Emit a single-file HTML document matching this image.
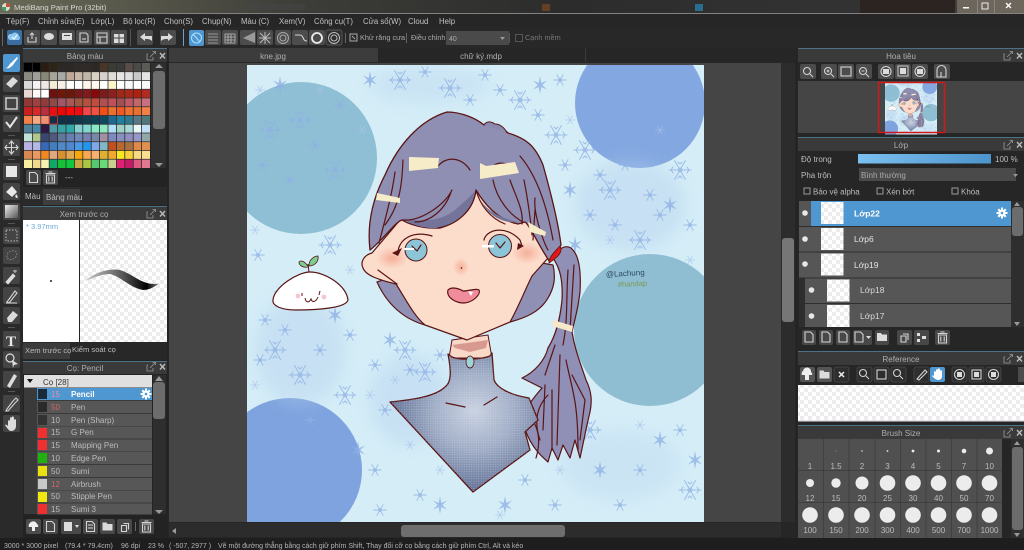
<!DOCTYPE html>
<html lang="vi"><head><meta charset="utf-8"><title>MediBang Paint Pro</title>
<style>
html,body{margin:0;padding:0;background:#222;width:1024px;height:550px;overflow:hidden}
svg{display:block;filter:blur(.35px)}
text{font-family:"Liberation Sans","Noto Sans CJK JP",sans-serif;font-size:8px;fill:#bcbcbc}
.h{fill:#b0b0b0;text-anchor:middle}
.b{fill:#4c4c4c}
.w{fill:#dcdcdc}
.l{fill:none;stroke:#d4d4d4;stroke-width:1.1}
.o{fill:none;stroke:#5a1414;stroke-width:1.2;stroke-linecap:round;stroke-linejoin:round}
</style></head><body>
<svg xmlns="http://www.w3.org/2000/svg" width="1024" height="550" viewBox="0 0 1024 550">
<defs>
<pattern id="ck" width="8" height="8" patternUnits="userSpaceOnUse"><rect width="8" height="8" fill="#fff"/><rect width="4" height="4" fill="#ececec"/><rect x="4" y="4" width="4" height="4" fill="#ececec"/></pattern>
<pattern id="dots" width="2.4" height="2.4" patternUnits="userSpaceOnUse"><circle cx="1.2" cy="1.2" r=".5" fill="#e4e8f2" opacity=".5"/></pattern>
<linearGradient id="tb" x1="0" x2="1"><stop offset="0" stop-color="#6a6a58"/><stop offset=".3" stop-color="#3c3c38"/><stop offset=".55" stop-color="#2c2c2c"/><stop offset=".85" stop-color="#333"/><stop offset="1" stop-color="#4a4640"/></linearGradient>
<linearGradient id="sl" x1="0" x2="1"><stop offset="0" stop-color="#7cc0f0"/><stop offset="1" stop-color="#4c94cc"/></linearGradient>
<linearGradient id="st" x1="0" x2="1"><stop offset="0" stop-color="#ccc"/><stop offset=".5" stop-color="#555"/><stop offset=".8" stop-color="#000"/><stop offset="1" stop-color="#999"/></linearGradient>
<linearGradient id="gr" x1="0" x2="1" y1="0" y2="1"><stop offset="0" stop-color="#eee"/><stop offset="1" stop-color="#555"/></linearGradient>
<radialGradient id="sw" cx=".57" cy=".42" r=".55"><stop offset="0" stop-color="#c9d2e2"/><stop offset=".5" stop-color="#a0adc6"/><stop offset="1" stop-color="#67769a"/></radialGradient>
<radialGradient id="bl"><stop offset="0" stop-color="#f4a890" stop-opacity=".85"/><stop offset="1" stop-color="#f4a890" stop-opacity="0"/></radialGradient>
<clipPath id="cv"><rect x="247" y="65" width="457" height="457"/></clipPath>
<clipPath id="th"><rect x="247" y="65" width="457" height="457"/></clipPath>
<filter id="hz"><feGaussianBlur stdDeviation="8"/></filter>
<g id="f" stroke="#8eb0e4" stroke-width="1" fill="none" stroke-linecap="round"><path d="M-11 0H11M-5.500-9.500 5.500 9.500M-5.500 9.500 5.500-9.500M7-3 9 0 7 3M-7-3-9 0-7 3M-2-8 0-6 2-8M-2 8 0 6 2 8"/><circle r="2"/></g>
<g id="m" transform="scale(.6)" stroke="#8eb0e4" stroke-width="1.500" fill="none"><path d="M-11 0H11M-5.500-9.500 5.500 9.500M-5.500 9.500 5.500-9.500"/><circle r="2.500"/></g>
<g id="s" fill="#8eb0e4"><path d="M0-9 1.300-2 7-4.500 2.300 0 7 4.500 1.300 2 0 9-1.300 2-7 4.500-2.300 0-7-4.500-1.300-2Z"/></g>
<g id="d" stroke="#a8c4ec" stroke-width=".8" fill="none"><path d="M-5 0H5M-2.500-4.300 2.500 4.300M-2.500 4.300 2.500-4.300"/></g>
<rect id="bb" width="16" height="15" rx="2" fill="#4c4c4c"/>
<rect id="bt" width="17" height="17" rx="2" fill="#444"/>
<g id="ext"><path d="M1 3H0V9H6V6" fill="none" stroke="#999" stroke-width=".8"/><path d="M3 6 8 1M5.500 .5H8.500V3" fill="none" stroke="#999" stroke-width=".8"/><path d="M13 2 18 7.500M18 2 13 7.500" stroke="#bbb" stroke-width="1.400"/></g>
<g id="trash"><path d="M-4-3H4V5H-4ZM-5-4.500H5M-2-6H2" class="l"/><path d="M-1.700-1.500V3.500M1.700-1.500V3.500" class="l"/></g>
<g id="doc"><path d="M-4-5H1.500L4-2.500V5H-4Z" class="l"/></g>
<g id="fold"><path d="M-5-4H-1L0-2.500H5V4H-5Z" class="w"/></g>
<g id="dup"><path d="M-3-1H2V5H-3Z" class="l"/><path d="M-1-3H4V3" class="l"/></g>
<g id="gear" fill="#fff"><circle r="3.500"/><path d="M-1-5.500H1V5.500H-1ZM-5.500-1H5.500V1H-5.500Z"/><path d="M-4.500-3 -3-4.500 4.500 3 3 4.500ZM4.500-3 3-4.500-4.500 3-3 4.500Z"/><circle r="1.300" fill="#4f97d0"/></g>
<g id="art">
<rect x="247" y="65" width="457" height="457" fill="#d4edf7"/>
<circle cx="301" cy="158" r="76" fill="#8fbfd4"/>
<circle cx="640" cy="103" r="65" fill="#83a7e0"/>
<circle cx="650" cy="330" r="76" fill="#8fbdd2"/>
<circle cx="290" cy="470" r="72" fill="#7ea3de"/>
<g opacity=".4" filter="url(#hz)">
<ellipse cx="300" cy="350" rx="45" ry="55" fill="#b4cfee"/>
<ellipse cx="630" cy="205" rx="55" ry="45" fill="#b4cfee"/>
<ellipse cx="430" cy="85" rx="60" ry="18" fill="#bcd6f0"/>
<ellipse cx="410" cy="400" rx="40" ry="45" fill="#b4cfee"/>
<ellipse cx="620" cy="465" rx="60" ry="35" fill="#c0d8f2"/>
</g>
<g opacity=".78">
<use href="#f" x="270" y="130"/><use href="#f" x="300" y="120"/><use href="#m" x="340" y="105"/><use href="#m" x="290" y="180"/><use href="#f" x="335" y="170"/><use href="#m" x="315" y="145"/><use href="#m" x="262" y="165"/>
<use href="#f" x="400" y="80"/><use href="#f" x="450" y="88"/><use href="#m" x="485" y="75"/><use href="#f" x="520" y="100"/><use href="#m" x="560" y="80"/><use href="#m" x="425" y="72"/><use href="#m" x="500" y="90"/><use href="#m" x="538" y="115"/><use href="#m" x="470" y="100"/>
<use href="#f" x="556" y="135"/><use href="#f" x="585" y="150"/><use href="#f" x="610" y="190"/><use href="#m" x="650" y="195"/><use href="#f" x="680" y="170"/><use href="#m" x="590" y="215"/><use href="#f" x="640" y="240"/><use href="#m" x="690" y="225"/><use href="#m" x="600" y="175"/><use href="#m" x="565" y="165"/><use href="#m" x="625" y="165"/><use href="#m" x="660" y="215"/><use href="#m" x="615" y="225"/>
<use href="#m" x="258" y="255"/><use href="#f" x="330" y="245"/><use href="#f" x="275" y="350"/><use href="#f" x="300" y="375"/><use href="#m" x="265" y="320"/><use href="#m" x="350" y="335"/><use href="#f" x="345" y="395"/><use href="#m" x="375" y="365"/><use href="#m" x="285" y="330"/><use href="#m" x="260" y="360"/><use href="#m" x="320" y="350"/>
<use href="#f" x="405" y="350"/><use href="#f" x="425" y="372"/><use href="#m" x="385" y="410"/><use href="#m" x="375" y="470"/><use href="#m" x="420" y="495"/><use href="#m" x="525" y="480"/><use href="#m" x="410" y="370"/><use href="#m" x="440" y="355"/>
<use href="#m" x="555" y="505"/><use href="#f" x="590" y="430"/><use href="#m" x="640" y="470"/><use href="#f" x="690" y="490"/><use href="#m" x="620" y="505"/><use href="#m" x="680" y="430"/><use href="#m" x="380" y="510"/><use href="#m" x="310" y="420"/>
<use href="#s" x="280" y="85"/><use href="#s" x="370" y="80"/><use href="#s" x="540" y="85"/><use href="#s" x="670" y="205"/><use href="#s" x="575" y="245"/><use href="#s" x="280" y="295"/><use href="#s" x="335" y="315"/><use href="#s" x="390" y="340"/><use href="#s" x="358" y="450"/><use href="#s" x="440" y="505"/><use href="#s" x="505" y="505"/><use href="#s" x="600" y="470"/><use href="#s" x="660" y="440"/><use href="#s" x="695" y="460"/><use href="#s" x="570" y="190"/>
<use href="#d" x="260" y="90"/><use href="#d" x="320" y="90"/><use href="#d" x="362" y="130"/><use href="#d" x="255" y="230"/><use href="#d" x="350" y="270"/><use href="#d" x="255" y="385"/><use href="#d" x="395" y="380"/><use href="#d" x="370" y="395"/><use href="#d" x="410" y="445"/><use href="#d" x="440" y="470"/><use href="#d" x="500" y="515"/><use href="#d" x="560" y="470"/><use href="#d" x="575" y="420"/><use href="#d" x="640" y="425"/><use href="#d" x="610" y="240"/><use href="#d" x="690" y="260"/><use href="#d" x="660" y="130"/><use href="#d" x="570" y="120"/>
</g>
<!-- mochi -->
<path d="M273 300C274 287 298 272 310 272C325 272 346 285 348 300C346 308 318 310 296 310C282 310 272 306 273 300Z" fill="#fff" stroke="#5a1414" stroke-width="1.200"/>
<path d="M309 272 308 264" stroke="#5a1414" fill="none"/>
<path d="M308 266C304 261 301 260 299 262C299 266 304 268 308 267Z" fill="#7ccf90" stroke="#5a1414" stroke-width=".8"/>
<path d="M309 265C309 260 314 256 318 256C319 261 315 266 309 266Z" fill="#7ccf90" stroke="#5a1414" stroke-width=".8"/>
<circle cx="298" cy="296" r="2.400" fill="#f6c6d0"/><circle cx="324" cy="297" r="2.400" fill="#f6c6d0"/>
<path d="M302 293 302 296M320 291 319 295M305 298C306 303 309 303 311 299C312 303 316 302 318 297" fill="none" stroke="#5a1414" stroke-width="1"/>
<!-- back hair lower -->
<path d="M377 282C385 300 400 318 425 325L510 322C525 318 540 312 548 298C554 288 556 278 553 265L470 250Z" fill="#9090b4" stroke="#5a1414" stroke-width="1.200"/>
<!-- ponytail -->
<path d="M553 258C558 248 567 243 573 250C580 258 581 275 580 292C578 310 574 322 572 332C575 350 580 362 586 380C592 392 592 402 590 412C586 428 583 445 580 458L575 440 570 458 563 445 558 460 552 448 548 462C540 455 532 447 526 432L520 430C522 415 527 405 542 388L522 378C535 372 545 360 548 348C556 335 560 320 562 300C563 280 560 268 553 258Z" fill="#9090b6" stroke="#5a1414" stroke-width="1.200" stroke-linejoin="round"/>
<path d="M568 270C566 300 568 320 563 345M574 265 570 330M555 345 545 375M560 355 557 445M566 360C572 390 578 400 578 450M572 375 585 400 580 440M548 395C538 405 533 420 540 440M552 390 552 450M545 385 543 430M532 420C540 430 540 445 536 458" class="o"/>
<path d="M553 320 573 326 572 332 552 326Z" fill="#f6e8c8"/>
<!-- neck -->
<path d="M452 340 449 358 492 358 488 335Z" fill="#fad8c8" stroke="#5a1414"/>
<path d="M452 345 488 340 486 348 470 352 455 348Z" fill="#d89a90"/>
<!-- sweater -->
<path d="M448 354 452 357C458 360 480 360 490 356L492 353 494 380C497 388 510 395 529 398L538 420 525 432 530 450 473 492 390 402C410 400 435 397 445 387 452 382 451 370 448 354Z" fill="url(#sw)" stroke="#5a1414" stroke-width="1.300" stroke-linejoin="round"/>
<path d="M448 354 452 357C458 360 480 360 490 356L492 353 494 380C497 388 510 395 529 398L538 420 525 432 530 450 473 492 390 402C410 400 435 397 445 387 452 382 451 370 448 354Z" fill="url(#dots)"/>
<path d="M446 403 465 407M484 405 497 397" class="o"/>
<ellipse cx="470" cy="362" rx="4" ry="6" fill="#9ed4d8" stroke="#5a1414" stroke-width=".8"/>
<!-- face -->
<path d="M400 220 372 253C364 255 360 262 363 268 366 276 380 280 396 284 405 298 414 316 425 325L467 340 510 322C517 310 525 290 532 276L548 258C556 250 540 220 530 215L470 190Z" fill="#fcdccb" stroke="#5a1414" stroke-width="1.200" stroke-linejoin="round"/>
<path d="M378 270 397 284" class="o"/>
<ellipse cx="392" cy="258" rx="16" ry="11" fill="url(#bl)"/>
<ellipse cx="527" cy="253" rx="15" ry="11" fill="url(#bl)"/>
<ellipse cx="461" cy="267" rx="8" ry="9" fill="url(#bl)"/>
<circle cx="461.500" cy="268" r=".8" fill="#5a1414"/>
<!-- mouth -->
<path d="M448 290C452 286 460 289 463 291 470 291 476 288 479 290 481 294 474 302 464 303 455 303 446 297 448 290Z" fill="#f08c9c" stroke="#5a1414" stroke-width="1.200"/>
<path d="M468 291 473 292 471 296Z" fill="#fff"/>
<!-- eyes -->
<circle cx="416" cy="250" r="11" fill="#8cc4d8" stroke="#5a1414" stroke-width="1"/>
<circle cx="500" cy="246" r="11.500" fill="#8cc4d8" stroke="#5a1414" stroke-width="1"/>
<path d="M412 246 417 251 421 245M496 243 500 248 505 242" class="o" stroke-width=".9"/>
<path d="M398 253C398 240 412 230 432 236" class="o" stroke-width="2.200"/>
<path d="M484 240C486 230 505 224 520 240L522 246" class="o" stroke-width="2.200"/>
<path d="M392 253 402 248 398 256Z M518 243 524 246 517 250Z" fill="#5a1414"/>
<rect x="404" y="248" width="10" height="2" fill="#fff"/><rect x="482" y="245" width="12" height="2.500" fill="#fff"/>
<!-- hair -->
<path d="M370 250C367 225 372 200 385 175 398 145 420 120 447 112 462 112 477 119 484 125 490 122 500 125 508 133 525 138 535 145 543 165 550 190 558 220 561 245L550 262C538 245 530 225 525 222L518 224C498 220 485 205 476 190 474 205 462 222 440 228 425 229 410 225 402 220 395 222 385 238 370 250Z" fill="#8f8fb4" stroke="#5a1414" stroke-width="1.300" stroke-linejoin="round"/>
<path d="M484 125C487 120 492 122 495 124 500 124 505 128 507 133" fill="#8a8ab0" stroke="#5a1414"/>
<path d="M403 218C420 222 440 222 455 210 464 202 472 195 476 190 474 205 462 222 440 228 425 229 410 225 403 218Z" fill="#74749a"/>
<path d="M480 200C488 212 505 220 520 222 505 224 490 218 480 200Z" fill="#74749a"/>
<path d="M403 160C402 185 400 205 385 225M395 172C392 195 385 220 379 243M402 220C420 222 445 205 452 190M415 222C430 222 445 210 451 192M438 228C460 224 474 208 476 190M476 190C480 205 490 218 505 224M493 180C497 200 510 215 523 222M510 180C515 195 524 210 522 224M524 180C527 195 530 215 532 235M535 210 533 240M520 156C532 170 545 195 553 240M535 198C533 215 545 245 548 250M438 166C448 155 462 158 470 170M490 172C492 162 505 160 512 168" class="o"/>
<path d="M409 157 439 158 438 168 409 171Z M480 163 486 166 515 162 519 173 480 179Z M377 193 400 198 400 203 376 200Z M528 222 546 232 545 236 530 232Z" fill="#f6ecc8"/>
<path d="M549 263C548 258 556 250 560 246L561 248C562 254 556 258 549 263Z" fill="#e01818" stroke="#5a1414" stroke-width=".8"/>
<!-- signature -->
<text x="606" y="277" style="font-size:8px;fill:#2e4a60" transform="rotate(-3 606 277)">@Lachung</text>
<text x="618" y="287" style="font-size:7.500px;fill:#7a9a50" transform="rotate(-3 618 287)">#handap</text>
</g>
</defs>

<rect width="1024" height="550" fill="#232323"/>
<!-- title bar -->
<rect width="1024" height="13.500" fill="url(#tb)"/>
<rect x="245" y="4" width="60" height="6" fill="#444" opacity=".6"/><rect x="542" y="4" width="8" height="7" fill="#8a4a24" opacity=".6"/><rect x="695" y="4" width="8" height="7" fill="#2a88b8" opacity=".7"/><rect x="860" y="0" width="95" height="13" fill="#2c2420"/>
<circle cx="6" cy="7" r="4" fill="#d8e0d0"/><path d="M6 3A4 4 0 0 1 10 7H6Z" fill="#d04a30"/><path d="M2 7A4 4 0 0 0 6 11V7Z" fill="#38a060"/>
<text x="14" y="10" style="fill:#d8d8d4;font-size:7.700px">MediBang Paint Pro (32bit)</text>
<rect x="957" y="0" width="67" height="13" fill="#6c665c"/><rect x="977" y="0" width="1" height="13" fill="#8a847a"/><rect x="994" y="0" width="1" height="13" fill="#8a847a"/>
<rect x="963" y="7" width="6" height="1.500" fill="#fff"/><rect x="982" y="3" width="6" height="6" fill="none" stroke="#eee"/><path d="M1006 3 1011 8M1011 3 1006 8" stroke="#fff" stroke-width="1.300"/>
<rect y="13" width="1024" height=".8" fill="#9a9a9a"/>
<!-- menu -->
<rect y="14" width="1024" height="13" fill="#262626"/>
<text y="24" style="font-size:7.800px;fill:#c0c0c0"><tspan x="6">Tệp(F)</tspan><tspan x="38">Chỉnh sửa(E)</tspan><tspan x="91">Lớp(L)</tspan><tspan x="123">Bộ lọc(R)</tspan><tspan x="164">Chọn(S)</tspan><tspan x="202">Chụp(N)</tspan><tspan x="241">Màu (C)</tspan><tspan x="279">Xem(V)</tspan><tspan x="314">Công cụ(T)</tspan><tspan x="363">Cửa sổ(W)</tspan><tspan x="408">Cloud</tspan><tspan x="439">Help</tspan></text>
<rect y="27" width="1024" height="21" fill="#282828"/>
<!-- top toolbar -->
<g fill="#4c4c4c"><rect x="7" y="30" width="15" height="15" rx="2" fill="#3a6ea0"/><use href="#bb" x="24" y="30"/><use href="#bb" x="41" y="30"/><use href="#bb" x="59" y="30"/><use href="#bb" x="76" y="30"/><use href="#bb" x="94" y="30"/><use href="#bb" x="111" y="30"/><use href="#bb" x="137" y="30"/><use href="#bb" x="160" y="30"/></g>
<path d="M10 40A3 3 0 0 1 12 34 4 4 0 0 1 19 36 2.500 2.500 0 0 1 19 40Z" fill="#8cc8f0"/><path d="M12 37 14 39 17 35" stroke="#fff" fill="none"/>
<path d="M28 37V42H36V37M32 39V33M30 35 32 33 34 35" class="l"/>
<ellipse cx="49" cy="36.500" rx="5" ry="3.500" class="w"/><rect x="62" y="33" width="10" height="7" class="w"/><rect x="64" y="35" width="6" height="1" fill="#444"/><path d="M80 33H86L88 35V42H80Z" class="l"/><path d="M82 39H86" class="l"/><path d="M97 33H107V43H97ZM97 37H107M100 37V43" class="l"/><rect x="114" y="34" width="10" height="9" class="w"/><path d="M114 38H124M119 34V43" stroke="#444"/>
<path d="M140 37 145 33V36H152V41C150 39 148 39 145 39V41Z" class="w"/><path d="M173 37 168 33V36H161V41C163 39 165 39 168 39V41Z" class="w"/>
<rect x="2" y="29" width="1" height="17" fill="#666"/><rect x="130" y="29" width="1" height="17" fill="#555"/>
<rect x="183" y="29" width="1" height="17" fill="#6ea0c8"/>
<rect x="189" y="30" width="15" height="16" rx="2" fill="#4f97d0"/><circle cx="196.500" cy="38" r="5" fill="none" stroke="#aee0ff"/><path d="M193 34 200 42" stroke="#aee0ff"/>
<use href="#bb" x="205" y="30"/><use href="#bb" x="222" y="30"/><use href="#bb" x="240" y="30"/><use href="#bb" x="257" y="30"/><use href="#bb" x="275" y="30"/><use href="#bb" x="292" y="30"/><use href="#bb" x="309" y="30"/><rect x="326" y="30" width="16" height="15" rx="2" fill="#303030" stroke="#666" stroke-width=".7"/>
<path d="M208 34H218M208 37H218M208 40H218M208 43H218" stroke="#999"/><path d="M225 34H235V43H225ZM225 37H235M225 40H235M228 34V43M231 34V43" stroke="#bbb" fill="none" stroke-width=".8"/><path d="M255 32 243 38 255 43Z" fill="#999"/>
<path d="M260 33 270 43M270 33 260 43M259 38H271M265 32V44" stroke="#bbb" stroke-width="1"/><circle cx="283" cy="38" r="5.500" fill="none" stroke="#aaa"/><circle cx="283" cy="38" r="3" fill="none" stroke="#aaa"/>
<path d="M295 35H300C304 35 302 41 307 41" class="l"/><circle cx="317" cy="38" r="5" fill="none" stroke="#eee" stroke-width="1.800"/><circle cx="334" cy="38" r="5.500" fill="none" stroke="#bbb"/><circle cx="334" cy="38" r="3" fill="none" stroke="#bbb"/>
<rect x="345" y="33" width="1" height="10" fill="#666"/><rect x="350" y="34" width="7" height="7" fill="none" stroke="#aaa"/><path d="M352 36 355 39" stroke="#aaa"/>
<text x="360" y="40" style="font-size:7.300px;fill:#aaa">Khử răng cưa</text><rect x="406" y="33" width="1" height="10" fill="#666"/>
<text x="411" y="40" style="font-size:7.300px;fill:#aaa">Điều chỉnh</text>
<rect x="446" y="31" width="63" height="14" fill="#4a4a4a"/><text x="449" y="41" style="font-size:7px;fill:#aaa">40</text><path d="M500 37H505L502.500 40Z" fill="#999"/>
<rect x="509" y="33" width="1" height="10" fill="#555"/><rect x="515.500" y="34.500" width="7" height="7" fill="none" stroke="#555"/><text x="525" y="40" style="font-size:7.300px;fill:#777">Cạnh mềm</text>

<!-- centre -->
<rect x="168" y="48" width="628" height="490" fill="#262626"/>
<rect x="169" y="48" width="209" height="14" fill="#3c3c3c"/><text class="h" x="273" y="59">kne.jpg</text>
<text class="h" x="481" y="59">chữ ký.mdp</text><rect x="585" y="48" width="1" height="14" fill="#3a3a3a"/>
<rect x="169" y="63" width="612" height="459" fill="#454545"/>
<use href="#art" clip-path="url(#cv)"/>
<rect x="781" y="63" width="14" height="459" fill="#2c2c2c"/><rect x="782" y="238" width="12" height="84" rx="3" fill="#767676"/>
<rect x="169" y="523" width="612" height="14" fill="#2c2c2c"/><rect x="401" y="525" width="164" height="12" rx="3" fill="#6e6e6e"/><path d="M176 528 172 531 176 534Z" fill="#999"/>

<!-- left tools -->
<rect x="0" y="48" width="23" height="490" fill="#2a2a2a"/>
<rect x="3" y="54" width="17" height="18" rx="2" fill="#4f97d0"/>
<g><use href="#bt" x="3" y="75"/><use href="#bt" x="3" y="95"/><use href="#bt" x="3" y="115"/><use href="#bt" x="3" y="139"/><use href="#bt" x="3" y="163"/><use href="#bt" x="3" y="183"/><use href="#bt" x="3" y="203"/><use href="#bt" x="3" y="227"/><use href="#bt" x="3" y="247"/><use href="#bt" x="3" y="267"/><use href="#bt" x="3" y="287"/><use href="#bt" x="3" y="307"/><use href="#bt" x="3" y="331"/><use href="#bt" x="3" y="351"/><use href="#bt" x="3" y="371"/><use href="#bt" x="3" y="395"/><use href="#bt" x="3" y="415"/></g>
<rect x="8" y="135" width="7" height="1" fill="#555"/><rect x="8" y="159" width="7" height="1" fill="#555"/><rect x="8" y="223" width="7" height="1" fill="#555"/><rect x="8" y="327" width="7" height="1" fill="#555"/><rect x="8" y="391" width="7" height="1" fill="#555"/>
<path d="M6 68C9 67 9 64 11 63L17 57 18 58 13 65C11 67 9 69 6 68Z" fill="#fff"/>
<path d="M6 84 13 77 18 81 11 88Z" class="w"/><rect x="6" y="98" width="11" height="11" fill="none" stroke="#ccc" stroke-width="1.500"/>
<path d="M6 122 10 127 17 117" fill="none" stroke="#e4e4e4" stroke-width="2"/><path d="M11.500 141V154M5 147.500H18M9 144 11.500 141 14 144M9 151 11.500 154 14 151M7 145 5 147.500 7 150M16 145 18 147.500 16 150" class="l"/>
<rect x="6" y="166" width="11" height="11" fill="#e8e8e8"/><path d="M6 192 12 186 17 192 12 197Z" fill="#e8e8e8"/><path d="M16 194C18 196 18 198 17 198 15 198 15 196 16 194Z" fill="#e8e8e8"/><rect x="5" y="205" width="13" height="13" fill="url(#gr)"/>
<rect x="6" y="230" width="11" height="11" fill="none" stroke="#bbb" stroke-dasharray="1.500 1.500"/>
<path d="M7 257C6 252 12 250 15 251 18 252 17 258 13 259 10 260 8 260 7 257Z" fill="none" stroke="#888" stroke-dasharray="1.500 1.500"/>
<path d="M6 282 13 274 15 276 8 284ZM15 270V273M13 271H17" fill="#ddd" stroke="#ddd" stroke-width=".8"/>
<path d="M7 302 15 291 17 293 9 303ZM6 303H17" class="l"/><path d="M7 318 13 311 18 315 12 322 8 322Z" class="w"/>
<text x="6" y="346" style="font:bold 15px 'Liberation Serif',serif;fill:#e8e8e8">T</text>
<circle cx="10" cy="358" r="4" fill="none" stroke="#ddd" stroke-width="1.200"/><path d="M12 360 18 364 14 365 13 368Z" class="w"/>
<path d="M7 386 14 374 17 376 10 388Z" class="w"/><path d="M7 409 13 401 16 398 18 400 15 403 8 411 6 411Z" class="l"/>
<path d="M8 428V421C8 420 10 420 10 421V418C10 417 12 417 12 418V417C12 416 14 416 14 418V420C14 419 16 419 16 420V426C16 429 14 431 11 431 9 431 7 428 5 425 6 424 7 425 8 426Z" class="w"/>

<!-- left panel: palette -->
<rect x="23" y="48" width="144" height="1" fill="#4c7188"/>
<rect x="23" y="49" width="144" height="13" fill="#3a3a3a"/><text class="h" x="85" y="59">Bảng màu</text><use href="#ext" x="147" y="51"/>
<g><rect x="24" y="63" width="126" height="105" fill="#2d2d2d"/>
<g transform="translate(24 63)"><g transform="scale(8.400 8.750)">
<g><rect x="0" y="0" width="1" height="1" fill="#000"/><rect x="1" y="0" width="1" height="1" fill="#000"/><rect x="2" y="0" width="1" height="1" fill="#2a1c10"/><rect x="3" y="0" width="1" height="1" fill="#2e2416"/><rect x="4" y="0" width="1" height="1" fill="#2c2824"/><rect x="5" y="0" width="1" height="1" fill="#2c2824"/><rect x="6" y="0" width="1" height="1" fill="#302a28"/><rect x="7" y="0" width="1" height="1" fill="#302a28"/><rect x="8" y="0" width="1" height="1" fill="#2e2824"/><rect x="9" y="0" width="1" height="1" fill="#4a3626"/><rect x="10" y="0" width="1" height="1" fill="#3a3a36"/><rect x="11" y="0" width="1" height="1" fill="#3a3a38"/><rect x="12" y="0" width="1" height="1" fill="#5a4c48"/><rect x="13" y="0" width="1" height="1" fill="#4a4a46"/><rect x="14" y="0" width="1" height="1" fill="#5c5a56"/></g>
<g transform="translate(0 1)"><rect x="0" width="1" height="1" fill="#8a8a80"/><rect x="1" width="1" height="1" fill="#a0a098"/><rect x="2" width="1" height="1" fill="#888878"/><rect x="3" width="1" height="1" fill="#a8a498"/><rect x="4" width="1" height="1" fill="#a8a8a4"/><rect x="5" width="1" height="1" fill="#c0a898"/><rect x="6" width="1" height="1" fill="#c8b8a8"/><rect x="7" width="1" height="1" fill="#c0b8a8"/><rect x="8" width="1" height="1" fill="#d8d0c0"/><rect x="9" width="1" height="1" fill="#d8d0cc"/><rect x="10" width="1" height="1" fill="#e0dcd8"/><rect x="11" width="1" height="1" fill="#e8e4e4"/><rect x="12" width="1" height="1" fill="#e0e0e0"/><rect x="13" width="1" height="1" fill="#c8c8c8"/><rect x="14" width="1" height="1" fill="#e4e4e4"/></g>
<g transform="translate(0 2)"><rect x="0" width="1" height="1" fill="#d8d8d8"/><rect x="1" width="1" height="1" fill="#f4f4f4"/><rect x="2" width="1" height="1" fill="#f0e8e4"/><rect x="3" width="1" height="1" fill="#f4ecd8"/><rect x="4" width="1" height="1" fill="#f8f0e8"/><rect x="5" width="1" height="1" fill="#fff"/><rect x="6" width="1" height="1" fill="#fff"/><rect x="7" width="1" height="1" fill="#fff8e8"/><rect x="8" width="1" height="1" fill="#fff8f0"/><rect x="9" width="1" height="1" fill="#fff"/><rect x="10" width="1" height="1" fill="#fff4c8"/><rect x="11" width="1" height="1" fill="#fff"/><rect x="12" width="1" height="1" fill="#f8f8f8"/><rect x="13" width="1" height="1" fill="#fff"/><rect x="14" width="1" height="1" fill="#f8f8f8"/></g>
<g transform="translate(0 3)"><rect x="0" width="1" height="1" fill="#e8d8d4"/><rect x="1" width="1" height="1" fill="#fff8f4"/><rect x="2" width="1" height="1" fill="#fff"/><rect x="3" width="1" height="1" fill="#701010"/><rect x="4" width="1" height="1" fill="#701808"/><rect x="5" width="1" height="1" fill="#6a1808"/><rect x="6" width="1" height="1" fill="#781818"/><rect x="7" width="1" height="1" fill="#801a1c"/><rect x="8" width="1" height="1" fill="#8a0808"/><rect x="9" width="1" height="1" fill="#7a1c1c"/><rect x="10" width="1" height="1" fill="#8a2020"/><rect x="11" width="1" height="1" fill="#a02818"/><rect x="12" width="1" height="1" fill="#a82818"/><rect x="13" width="1" height="1" fill="#b02010"/><rect x="14" width="1" height="1" fill="#b02c20"/></g>
<g transform="translate(0 4)"><rect x="0" width="1" height="1" fill="#903838"/><rect x="1" width="1" height="1" fill="#a04040"/><rect x="2" width="1" height="1" fill="#903c3c"/><rect x="3" width="1" height="1" fill="#904848"/><rect x="4" width="1" height="1" fill="#a05868"/><rect x="5" width="1" height="1" fill="#a85858"/><rect x="6" width="1" height="1" fill="#a05840"/><rect x="7" width="1" height="1" fill="#b85040"/><rect x="8" width="1" height="1" fill="#c04c3c"/><rect x="9" width="1" height="1" fill="#b05050"/><rect x="10" width="1" height="1" fill="#c05058"/><rect x="11" width="1" height="1" fill="#a05050"/><rect x="12" width="1" height="1" fill="#c05868"/><rect x="13" width="1" height="1" fill="#c06868"/><rect x="14" width="1" height="1" fill="#c87080"/></g>
<g transform="translate(0 5)"><rect x="0" width="1" height="1" fill="#c82020"/><rect x="1" width="1" height="1" fill="#d82828"/><rect x="2" width="1" height="1" fill="#b83040"/><rect x="3" width="1" height="1" fill="#e81010"/><rect x="4" width="1" height="1" fill="#e80808"/><rect x="5" width="1" height="1" fill="#f80808"/><rect x="6" width="1" height="1" fill="#f00c10"/><rect x="7" width="1" height="1" fill="#f04848"/><rect x="8" width="1" height="1" fill="#f05040"/><rect x="9" width="1" height="1" fill="#f05018"/><rect x="10" width="1" height="1" fill="#e87030"/><rect x="11" width="1" height="1" fill="#f05828"/><rect x="12" width="1" height="1" fill="#f07030"/><rect x="13" width="1" height="1" fill="#e87030"/><rect x="14" width="1" height="1" fill="#f08048"/></g>
<g transform="translate(0 6)"><rect x="0" width="1" height="1" fill="#f08048"/><rect x="1" width="1" height="1" fill="#f8a880"/><rect x="2" width="1" height="1" fill="#f09070"/><rect x="3" width="1" height="1" fill="#103048"/><rect x="4" width="1" height="1" fill="#103048"/><rect x="5" width="1" height="1" fill="#103048"/><rect x="6" width="1" height="1" fill="#103848"/><rect x="7" width="1" height="1" fill="#104050"/><rect x="8" width="1" height="1" fill="#104058"/><rect x="9" width="1" height="1" fill="#104860"/><rect x="10" width="1" height="1" fill="#206890"/><rect x="11" width="1" height="1" fill="#2080a0"/><rect x="12" width="1" height="1" fill="#307890"/><rect x="13" width="1" height="1" fill="#587888"/><rect x="14" width="1" height="1" fill="#507878"/></g>
<g transform="translate(0 7)"><rect x="0" width="1" height="1" fill="#508098"/><rect x="1" width="1" height="1" fill="#4888a8"/><rect x="2" width="1" height="1" fill="#301840"/><rect x="3" width="1" height="1" fill="#5098a8"/><rect x="4" width="1" height="1" fill="#38a0a0"/><rect x="5" width="1" height="1" fill="#30a8a8"/><rect x="6" width="1" height="1" fill="#88d0d0"/><rect x="7" width="1" height="1" fill="#80d8d0"/><rect x="8" width="1" height="1" fill="#88e8c8"/><rect x="9" width="1" height="1" fill="#90e8c0"/><rect x="10" width="1" height="1" fill="#b0e0f8"/><rect x="11" width="1" height="1" fill="#a0d0c8"/><rect x="12" width="1" height="1" fill="#a8d8d8"/><rect x="13" width="1" height="1" fill="#e8f8f8"/><rect x="14" width="1" height="1" fill="#c0e0f8"/></g>
<g transform="translate(0 8)"><rect x="0" width="1" height="1" fill="#c0e0d8"/><rect x="1" width="1" height="1" fill="#b0c890"/><rect x="2" width="1" height="1" fill="#384870"/><rect x="3" width="1" height="1" fill="#505880"/><rect x="4" width="1" height="1" fill="#607898"/><rect x="5" width="1" height="1" fill="#6880b0"/><rect x="6" width="1" height="1" fill="#7088b8"/><rect x="7" width="1" height="1" fill="#7880b0"/><rect x="8" width="1" height="1" fill="#7888a8"/><rect x="9" width="1" height="1" fill="#a090a0"/><rect x="10" width="1" height="1" fill="#8088c0"/><rect x="11" width="1" height="1" fill="#8890c0"/><rect x="12" width="1" height="1" fill="#9090c0"/><rect x="13" width="1" height="1" fill="#9898c8"/><rect x="14" width="1" height="1" fill="#90a8a8"/></g>
<g transform="translate(0 9)"><rect x="0" width="1" height="1" fill="#b8b0e0"/><rect x="1" width="1" height="1" fill="#b0b8e8"/><rect x="2" width="1" height="1" fill="#3868b8"/><rect x="3" width="1" height="1" fill="#4080c0"/><rect x="4" width="1" height="1" fill="#5088c8"/><rect x="5" width="1" height="1" fill="#5088d0"/><rect x="6" width="1" height="1" fill="#4898e8"/><rect x="7" width="1" height="1" fill="#2098f0"/><rect x="8" width="1" height="1" fill="#80a8e8"/><rect x="9" width="1" height="1" fill="#80b8c8"/><rect x="10" width="1" height="1" fill="#c05020"/><rect x="11" width="1" height="1" fill="#b86830"/><rect x="12" width="1" height="1" fill="#a87040"/><rect x="13" width="1" height="1" fill="#e08848"/><rect x="14" width="1" height="1" fill="#e09050"/></g>
<g transform="translate(0 10)"><rect x="0" width="1" height="1" fill="#d88850"/><rect x="1" width="1" height="1" fill="#e89860"/><rect x="2" width="1" height="1" fill="#f08820"/><rect x="3" width="1" height="1" fill="#e0a880"/><rect x="4" width="1" height="1" fill="#d89030"/><rect x="5" width="1" height="1" fill="#e0a850"/><rect x="6" width="1" height="1" fill="#f8a808"/><rect x="7" width="1" height="1" fill="#f8a850"/><rect x="8" width="1" height="1" fill="#f8b070"/><rect x="9" width="1" height="1" fill="#e0b030"/><rect x="10" width="1" height="1" fill="#f0a830"/><rect x="11" width="1" height="1" fill="#f8e820"/><rect x="12" width="1" height="1" fill="#f8d038"/><rect x="13" width="1" height="1" fill="#f8d880"/><rect x="14" width="1" height="1" fill="#f8e090"/></g>
<g transform="translate(0 11)"><rect x="0" width="1" height="1" fill="#f8f0a0"/><rect x="1" width="1" height="1" fill="#f0d890"/><rect x="2" width="1" height="1" fill="#f8f0b0"/><rect x="3" width="1" height="1" fill="#10a868"/><rect x="4" width="1" height="1" fill="#18c038"/><rect x="5" width="1" height="1" fill="#10c840"/><rect x="6" width="1" height="1" fill="#c8a840"/><rect x="7" width="1" height="1" fill="#a8c840"/><rect x="8" width="1" height="1" fill="#58c870"/><rect x="9" width="1" height="1" fill="#68d878"/><rect x="10" width="1" height="1" fill="#c8d090"/><rect x="11" width="1" height="1" fill="#e02070"/><rect x="12" width="1" height="1" fill="#c81868"/><rect x="13" width="1" height="1" fill="#e05880"/><rect x="14" width="1" height="1" fill="#e07890"/></g>
</g></g>
<path d="M24 71.750H150M24 80.500H150M24 89.250H150M24 98H150M24 106.750H150M24 115.500H150M24 124.250H150M24 133H150M24 141.750H150M24 150.500H150M24 159.250H150M32.400 63V168M40.800 63V168M49.200 63V168M57.600 63V168M66 63V168M74.400 63V168M82.800 63V168M91.200 63V168M99.600 63V168M108 63V168M116.400 63V168M124.800 63V168M133.200 63V168M141.600 63V168" stroke="#2d2d2d" stroke-width=".8"/>
<rect x="49.500" y="115.700" width="8" height="8.300" fill="none" stroke="#c03030"/></g>
<rect x="151" y="63" width="15" height="105" fill="#303030"/><rect x="153" y="71" width="12" height="58" rx="3" fill="#6c6c6c"/><path d="M155 68 159 64 163 68ZM155 163 159 167 163 163Z" fill="#999"/>
<rect x="26" y="170" width="15" height="15" rx="2" fill="#484848"/><use href="#doc" x="33.500" y="177.500"/><rect x="43" y="170" width="15" height="15" rx="2" fill="#484848"/><use href="#trash" x="50.500" y="178"/><text x="65" y="180">---</text>
<rect x="23" y="187" width="144" height="18" fill="#2a2a2a"/><rect x="43" y="189" width="37" height="16" fill="#3e3e3e"/><text x="25" y="199">Màu</text><text x="46" y="200">Bảng màu</text>

<!-- brush preview -->
<rect x="23" y="206" width="144" height="1" fill="#4c7188"/>
<rect x="23" y="207" width="144" height="13" fill="#3a3a3a"/><text class="h" x="84" y="217">Xem trước cọ</text><use href="#ext" x="147" y="209"/>
<rect x="23" y="220" width="56" height="122" fill="#fff"/><rect x="80" y="220" width="87" height="122" fill="url(#ck)"/>
<text x="26" y="229" style="fill:#6ea8d4;font-size:7.500px">* 3.97mm</text><circle cx="51" cy="281" r="1" fill="#222"/>
<path d="M85 281C95 272 110 268 120 270 133 274 140 284 155 284 160 284 160 282 162 281 158 284 152 290 143 290 130 288 120 276 110 274 100 274 92 279 85 281Z" fill="url(#st)"/>
<rect x="23" y="342" width="144" height="18" fill="#282828"/><rect x="23" y="343" width="47" height="16" fill="#3c3c3c"/><text x="25" y="353" style="font-size:7.600px">Xem trước cọ</text><text x="72" y="352" style="font-size:7.600px">Kiểm soát cọ</text>

<!-- brush panel -->
<rect x="23" y="361" width="144" height="1" fill="#4c7188"/>
<rect x="23" y="362" width="144" height="12" fill="#3a3a3a"/><text class="h" x="85" y="371">Cọ: Pencil</text><use href="#ext" x="147" y="362"/>
<rect x="24" y="375" width="128" height="139" fill="#3a3a3a"/>
<rect x="24" y="375" width="128" height="12.500" fill="#e0e0e0"/><path d="M27 379H33L30 383Z" fill="#111"/><text x="43" y="385" style="fill:#333;font-size:8px">Cọ [28]</text>
<rect x="37" y="388" width="115" height="12" fill="#4f97d0"/>
<g fill="#575757"><rect x="37" y="401" width="115" height="12"/><rect x="37" y="414" width="115" height="12"/><rect x="37" y="426.500" width="115" height="12"/><rect x="37" y="439.500" width="115" height="12"/><rect x="37" y="452" width="115" height="12"/><rect x="37" y="465" width="115" height="12"/><rect x="37" y="478" width="115" height="12"/><rect x="37" y="490.500" width="115" height="12"/><rect x="37" y="503.500" width="115" height="11"/></g>
<rect x="38" y="389" width="9" height="10" fill="#1a2a3a"/><rect x="38" y="402" width="9" height="10" fill="#2a2a2a"/><rect x="38" y="415" width="9" height="10" fill="#333"/><rect x="38" y="428" width="9" height="10" fill="#f03030"/><rect x="38" y="440" width="9" height="10" fill="#f03030"/><rect x="38" y="453" width="9" height="10" fill="#20b010"/><rect x="38" y="466" width="9" height="10" fill="#e8e010"/><rect x="38" y="479" width="9" height="10" fill="#c8c8c8"/><rect x="38" y="492" width="9" height="10" fill="#f0e810"/><rect x="38" y="504" width="9" height="10" fill="#f03030"/>
<g style="font-size:8px">
<text x="51" y="397" style="fill:#f088a0">15</text><text x="71" y="397" style="fill:#fff;font-weight:bold">Pencil</text>
<text x="51" y="410" style="fill:#d06868">50</text><text x="71" y="410">Pen</text>
<text x="51" y="423">10</text><text x="71" y="423">Pen (Sharp)</text>
<text x="51" y="435">15</text><text x="71" y="435">G Pen</text>
<text x="51" y="448">15</text><text x="71" y="448">Mapping Pen</text>
<text x="51" y="461">10</text><text x="71" y="461">Edge Pen</text>
<text x="51" y="474">50</text><text x="71" y="474">Sumi</text>
<text x="51" y="487" style="fill:#d06868">12</text><text x="71" y="487">Airbrush</text>
<text x="51" y="499">50</text><text x="71" y="499">Stipple Pen</text>
<text x="51" y="512">15</text><text x="71" y="512">Sumi 3</text></g>
<use href="#gear" x="146" y="394"/>
<rect x="153" y="375" width="13" height="139" fill="#2e2e2e"/><rect x="153" y="382" width="12" height="37" rx="3" fill="#6c6c6c"/><path d="M155 381 159 376 163 381ZM155 510 159 514 163 510Z" fill="#999"/>
<rect x="26" y="519" width="15" height="15" rx="2" fill="#4c4c4c"/><path d="M29 527A3 3 0 0 1 30 523 4 4 0 0 1 37 524 2.500 2.500 0 0 1 38 527H35V531H32V527Z" fill="#eee"/>
<rect x="43" y="519" width="15" height="15" rx="2" fill="#484848"/><use href="#doc" x="50.500" y="526.500"/>
<rect x="61" y="519" width="20" height="15" rx="2" fill="#484848"/><rect x="64" y="522" width="8" height="9" fill="#ddd"/><path d="M75 525H79L77 528Z" fill="#ddd"/>
<rect x="83" y="519" width="15" height="15" rx="2" fill="#484848"/><use href="#doc" x="90.500" y="526.500"/><path d="M88 525H93M88 528H93" class="l"/>
<rect x="100" y="519" width="15" height="15" rx="2" fill="#484848"/><use href="#fold" x="107.500" y="526.500"/>
<rect x="117" y="519" width="15" height="15" rx="2" fill="#484848"/><use href="#dup" x="124.500" y="526.500"/><rect x="135" y="522" width="1" height="9" fill="#666"/>
<rect x="139" y="519" width="15" height="15" rx="2" fill="#484848"/><use href="#trash" x="146.500" y="527"/>

<!-- right panels -->
<rect x="797" y="48" width="227" height="490" fill="#262626"/>
<rect x="798" y="48" width="226" height="1" fill="#4c7188"/><rect x="798" y="49" width="226" height="13" fill="#3a3a3a"/><text class="h" x="901" y="59">Hoa tiêu</text><use href="#ext" x="1004" y="51"/>
<use href="#bb" x="800" y="64"/><use href="#bb" x="821" y="64"/><use href="#bb" x="838" y="64"/><use href="#bb" x="856" y="64"/><use href="#bb" x="878" y="64"/><use href="#bb" x="895" y="64"/><use href="#bb" x="912" y="64"/><use href="#bb" x="934" y="64"/>
<g><circle cx="807" cy="71" r="3.500" class="l"/><path d="M810 74 813 77" class="l"/><circle cx="828" cy="71" r="3.500" class="l"/><path d="M831 74 834 77M826.500 71H829.500M828 69.500V72.500" class="l"/><rect x="841" y="67" width="10" height="9" class="l"/><circle cx="863" cy="71" r="3.500" class="l"/><path d="M866 74 869 77M861.500 71H864.500" class="l"/><circle cx="886" cy="71.500" r="5" class="l"/><rect x="883" y="69" width="6" height="5" class="w"/><rect x="898" y="66" width="10" height="10" fill="none" stroke="#ccc"/><rect x="900" y="68" width="6" height="6" class="w"/><circle cx="920" cy="71.500" r="5" class="l"/><rect x="917" y="69" width="6" height="5" class="w"/><path d="M937 77V70A4 4 0 0 1 946 70V77ZM941 72V77" class="l"/></g>
<rect x="798" y="81" width="226" height="52" fill="#454545"/>
<g transform="translate(885 82.500) scale(.1138) translate(-247 -65)"><use href="#art" clip-path="url(#th)"/></g>
<rect x="878.500" y="82.500" width="66" height="50" fill="none" stroke="#d01818" stroke-width="1.500"/>

<rect x="798" y="137" width="226" height="1" fill="#4c7188"/><rect x="798" y="138" width="226" height="13" fill="#3a3a3a"/><text class="h" x="901" y="148">Lớp</text><use href="#ext" x="1004" y="140"/>
<text x="801" y="162">Độ trong</text><rect x="858" y="154" width="133" height="9.500" fill="url(#sl)"/><text x="995" y="162">100 %</text>
<text x="801" y="178">Pha trộn</text><rect x="859" y="168" width="157" height="13" fill="#4a4a4a"/><text x="861" y="178" style="fill:#aaa">Bình thường</text><path d="M1013 174H1018L1015.500 177Z" fill="#999"/>
<rect x="804" y="188" width="6" height="6" fill="none" stroke="#999"/><text x="813" y="194.500">Bảo vệ alpha</text>
<rect x="877" y="188" width="6" height="6" fill="none" stroke="#999"/><text x="886" y="194.500">Xén bớt</text>
<rect x="952" y="188" width="6" height="6" fill="none" stroke="#999"/><text x="961" y="194.500">Khóa</text>
<rect x="799" y="201" width="212" height="126" fill="#2e2e2e"/>
<rect x="799" y="201" width="13" height="25" fill="#555"/><rect x="811" y="201" width="200" height="25" fill="#4f97d0"/>
<g fill="#565656"><rect x="799" y="227" width="212" height="24.500"/><rect x="799" y="252.500" width="212" height="25"/><rect x="805" y="278.500" width="206" height="24.500"/><rect x="805" y="304" width="206" height="23"/></g>
<rect x="821" y="202" width="22.500" height="22" fill="url(#ck)"/><rect x="821" y="228" width="22.500" height="22" fill="url(#ck)"/><rect x="821" y="253.500" width="22.500" height="22" fill="url(#ck)"/><rect x="827" y="279.500" width="22.500" height="22" fill="url(#ck)"/><rect x="827" y="305" width="22.500" height="22" fill="url(#ck)"/>
<g><circle cx="805" cy="213" r="2.800" fill="#e8e8e8"/><circle cx="805" cy="239" r="2.800" fill="#e8e8e8"/><circle cx="805" cy="264" r="2.800" fill="#e8e8e8"/><circle cx="811.500" cy="290" r="2.800" fill="#e8e8e8"/><circle cx="811.500" cy="316" r="2.800" fill="#e8e8e8"/></g>
<text x="854" y="216.500" style="font-weight:bold;fill:#fff;font-size:8.500px">Lớp22</text><text x="854" y="242" style="fill:#e4e4e4;font-size:8.500px">Lớp6</text><text x="854" y="268" style="fill:#e4e4e4;font-size:8.500px">Lớp19</text><text x="860" y="293" style="fill:#d8d8d8;font-size:8.500px">Lớp18</text><text x="860" y="319" style="fill:#d8d8d8;font-size:8.500px">Lớp17</text>
<use href="#gear" x="1002" y="213"/>
<rect x="1011" y="201" width="13" height="126" fill="#2e2e2e"/><rect x="1012" y="207" width="11" height="29" rx="3" fill="#6c6c6c"/><path d="M1014 206 1017 202 1020 206ZM1014 322 1017 326 1020 322Z" fill="#999"/>
<rect x="802" y="330" width="14" height="15" rx="2" fill="#484848"/><use href="#doc" x="809" y="337"/><rect x="819" y="330" width="14" height="15" rx="2" fill="#484848"/><use href="#doc" x="826" y="337"/><rect x="836" y="330" width="14" height="15" rx="2" fill="#484848"/><use href="#doc" x="843" y="337"/><rect x="853" y="330" width="19" height="15" rx="2" fill="#484848"/><use href="#doc" x="859" y="337"/><path d="M866 336H871L868.500 339Z" fill="#ddd"/><rect x="875" y="330" width="14" height="15" rx="2" fill="#484848"/><use href="#fold" x="882" y="337"/><rect x="897" y="330" width="15" height="15" rx="2" fill="#484848"/><use href="#dup" x="904" y="337"/><rect x="914" y="330" width="15" height="15" rx="2" fill="#484848"/><rect x="917" y="333" width="3" height="3" fill="#ddd"/><rect x="917" y="339" width="3" height="3" fill="#ddd"/><rect x="922" y="336" width="4" height="3" fill="#ddd"/><rect x="935" y="330" width="15" height="15" rx="2" fill="#484848"/><use href="#trash" x="942.500" y="338"/>

<rect x="798" y="351" width="226" height="1" fill="#4c7188"/><rect x="798" y="352" width="226" height="13" fill="#3a3a3a"/><text class="h" x="901" y="362">Reference</text><use href="#ext" x="1004" y="354"/>
<rect x="800" y="367" width="15" height="15" rx="2" fill="#555"/><path d="M802 375A3 3 0 0 1 803 371 4 4 0 0 1 811 372 2.500 2.500 0 0 1 812 375H809V380H805V375Z" fill="#eee"/>
<rect x="817" y="367" width="15" height="15" rx="2" fill="#555"/><use href="#fold" x="824.500" y="374.500"/>
<rect x="834" y="367" width="15" height="15" rx="2" fill="#2e2e2e" stroke="#555" stroke-width=".6"/><path d="M839 372 844 377M844 372 839 377" stroke="#eee" stroke-width="1.500"/>
<rect x="857" y="367" width="15" height="15" rx="2" fill="#2e2e2e" stroke="#555" stroke-width=".6"/><circle cx="863" cy="373" r="3.500" class="l"/><path d="M866 376 869 379" class="l"/>
<rect x="874" y="367" width="15" height="15" rx="2" fill="#2e2e2e" stroke="#555" stroke-width=".6"/><rect x="877" y="370" width="9" height="9" class="l"/>
<rect x="891" y="367" width="15" height="15" rx="2" fill="#2e2e2e" stroke="#555" stroke-width=".6"/><circle cx="897" cy="373" r="3.500" class="l"/><path d="M900 376 903 379" class="l"/>
<rect x="914" y="367" width="15" height="15" rx="2" fill="#2e2e2e" stroke="#555" stroke-width=".6"/><path d="M917 379 925 370 927 372 919 380Z" class="l"/>
<rect x="930" y="367" width="15" height="15" rx="2" fill="#4f97d0"/><path d="M934 377V372C934 371 936 371 936 372V370C936 369 938 369 938 370V369C938 368 940 368 940 370V371C940 370 942 370 942 371V376C942 379 940 380 938 380 936 380 934 378 932 376 933 375 934 375 934 377Z" fill="#fff"/>
<rect x="952" y="367" width="15" height="15" rx="2" fill="#2e2e2e" stroke="#555" stroke-width=".6"/><circle cx="959.500" cy="374.500" r="5" class="l"/><rect x="957" y="372" width="5" height="5" class="w"/>
<rect x="969" y="367" width="15" height="15" rx="2" fill="#2e2e2e" stroke="#555" stroke-width=".6"/><rect x="972" y="370" width="9" height="9" class="l"/><rect x="974" y="372" width="5" height="5" class="w"/>
<rect x="986" y="367" width="15" height="15" rx="2" fill="#2e2e2e" stroke="#555" stroke-width=".6"/><circle cx="993.500" cy="374.500" r="5" class="l"/><rect x="991" y="372" width="5" height="5" class="w"/>
<rect x="1018" y="367" width="6" height="15" fill="#4c4c4c"/>
<rect x="798" y="385" width="226" height="36" fill="url(#ck)"/><rect x="798" y="420" width="226" height="1.500" fill="#e8e0e8"/>

<rect x="798" y="425" width="226" height="1" fill="#4c7188"/><rect x="798" y="426" width="226" height="13" fill="#3a3a3a"/><text class="h" x="901" y="436">Brush Size</text><use href="#ext" x="1004" y="428"/>
<rect x="798" y="439" width="204" height="99" fill="#505050"/>
<path d="M823.500 439V538M849 439V538M875 439V538M900.500 439V538M926 439V538M951.500 439V538M977 439V538M798 470.500H1002M798 502.500H1002" stroke="#3c3c3c" stroke-width=".8"/>
<g fill="#ececec"><circle cx="836" cy="451" r=".4"/><circle cx="862" cy="451" r=".7"/><circle cx="887.500" cy="451" r=".9"/><circle cx="913" cy="451" r="1.400"/><circle cx="938.500" cy="451" r="1.500"/><circle cx="964" cy="451" r="2.300"/><circle cx="989.500" cy="451" r="3.500"/>
<circle cx="810" cy="483" r="4"/><circle cx="836" cy="483" r="4.700"/><circle cx="862" cy="483" r="6.500"/><circle cx="887.500" cy="483" r="7.800"/><circle cx="913" cy="483" r="7.800"/><circle cx="938.500" cy="483" r="7.800"/><circle cx="964" cy="483" r="7.800"/><circle cx="989.500" cy="483" r="7.800"/>
<circle cx="810" cy="515" r="7.800"/><circle cx="836" cy="515" r="7.800"/><circle cx="862" cy="515" r="7.800"/><circle cx="887.500" cy="515" r="7.800"/><circle cx="913" cy="515" r="7.800"/><circle cx="938.500" cy="515" r="7.800"/><circle cx="964" cy="515" r="7.800"/><circle cx="989.500" cy="515" r="7.800"/></g>
<g style="text-anchor:middle;font-size:7px;fill:#cfcfcf"><text x="810" y="469">1</text><text x="836" y="469">1.5</text><text x="862" y="469">2</text><text x="887.500" y="469">3</text><text x="913" y="469">4</text><text x="938.500" y="469">5</text><text x="964" y="469">7</text><text x="989.500" y="469">10</text>
<text x="810" y="501">12</text><text x="836" y="501">15</text><text x="862" y="501">20</text><text x="887.500" y="501">25</text><text x="913" y="501">30</text><text x="938.500" y="501">40</text><text x="964" y="501">50</text><text x="989.500" y="501">70</text>
<text x="810" y="533">100</text><text x="836" y="533">150</text><text x="862" y="533">200</text><text x="887.500" y="533">300</text><text x="913" y="533">400</text><text x="938.500" y="533">500</text><text x="964" y="533">700</text><text x="989.500" y="533">1000</text></g>
<rect x="1011" y="439" width="13" height="99" fill="#2e2e2e"/><rect x="1012" y="447" width="11" height="83" rx="3" fill="#6c6c6c"/><path d="M1014 445 1017 441 1020 445ZM1014 533 1017 537 1020 533Z" fill="#999"/>

<!-- status -->
<rect y="538" width="1024" height="12" fill="#1e1e1e"/>
<text y="548" style="font-size:7px;fill:#b4b4b4"><tspan x="4">3000 * 3000 pixel</tspan><tspan x="65">(79.4 * 79.4cm)</tspan><tspan x="121">96 dpi</tspan><tspan x="148">23 %</tspan><tspan x="169">( -507, 2977 )</tspan><tspan x="218">Vẽ một đường thẳng bằng cách giữ phím Shift, Thay đổi cỡ cọ bằng cách giữ phím Ctrl, Alt và kéo</tspan></text>
</svg>
</body></html>
